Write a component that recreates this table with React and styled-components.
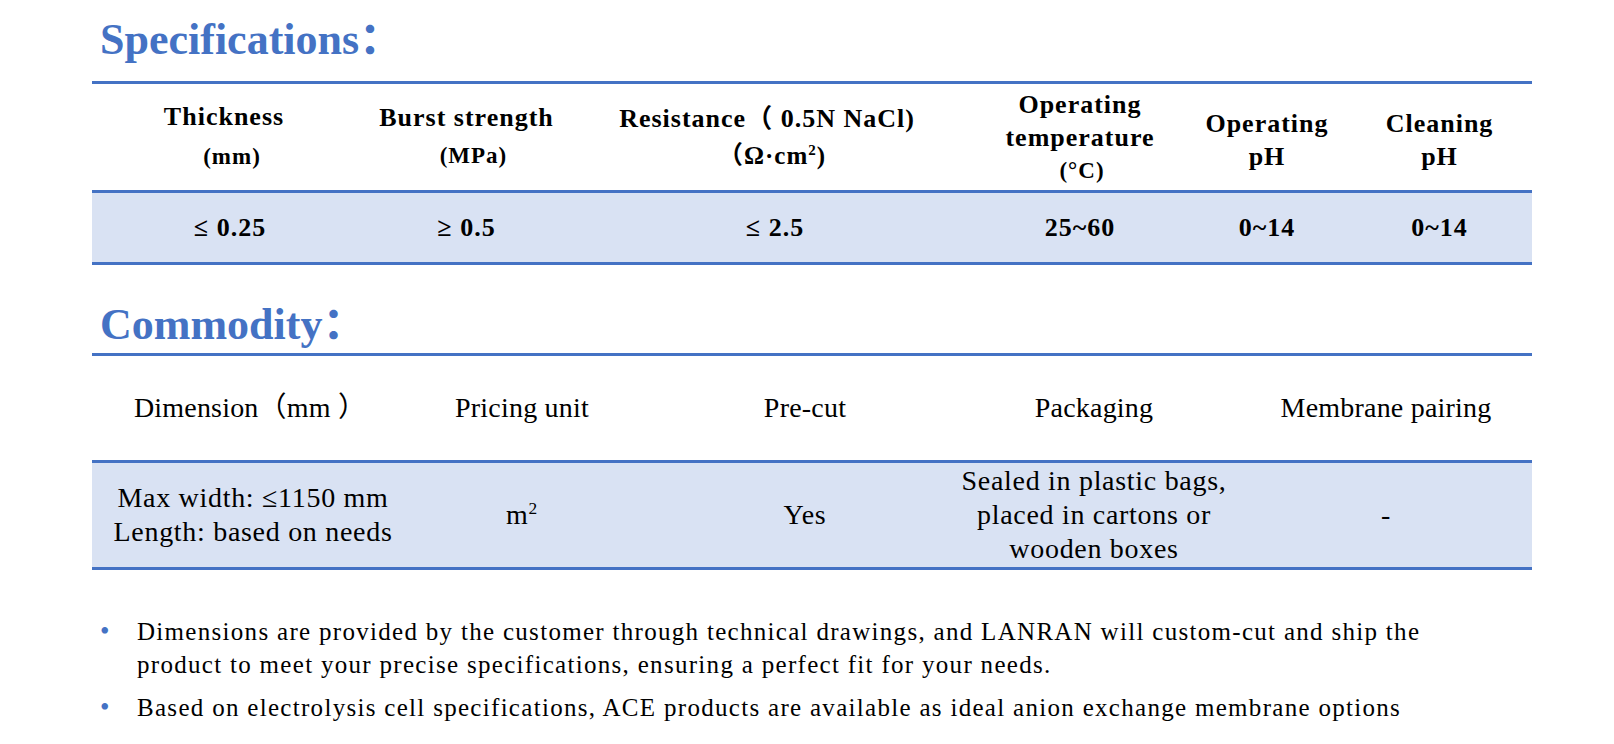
import React from "react";
import styled, { createGlobalStyle } from "styled-components";

const BLUE = "#4472C4";
const SHADE = "#D9E2F3";
const SERIF = `"Liberation Serif", "Times New Roman", "Noto Sans CJK SC", serif`;

const Global = createGlobalStyle`
  html, body { margin: 0; padding: 0; background: #fff; }
  body { font-family: ${SERIF}; color: #000; }
`;

const Page = styled.main`
  width: 1440px;
  padding: 14px 0 0 92px;
`;

const Title = styled.h2`
  margin: ${(p) => p.$mt}px 0 ${(p) => p.$mb}px;
  padding-left: 8px;
  font-family: ${SERIF};
  font-weight: bold;
  font-size: 44px;
  line-height: 52px;
  color: ${BLUE};
`;

const Table = styled.section`
  border-top: 3px solid ${BLUE};
  border-bottom: 3px solid ${BLUE};
`;

const Row = styled.div`
  display: grid;
  grid-template-columns: ${(p) => p.$cols};
  height: ${(p) => p.$h}px;
  background: ${(p) => (p.$shade ? SHADE : "transparent")};
  & + & {
    border-top: 3px solid ${BLUE};
  }
`;

const Cell = styled.div`
  display: flex;
  flex-direction: column;
  align-items: center;
  justify-content: center;
  text-align: center;
  padding-top: ${(p) => p.$pt || 0}px;
  padding-left: ${(p) => p.$pl || 0}px;
`;

const HeadLine = styled.span`
  font-weight: bold;
  font-size: ${(p) => p.$size || 26}px;
  line-height: ${(p) => p.$lh}px;
  letter-spacing: 1px;
  white-space: nowrap;
  padding-left: ${(p) => Math.max(p.$shift || 0, 0)}px;
  padding-right: ${(p) => Math.max(-(p.$shift || 0), 0)}px;
`;

const Value = styled.span`
  font-weight: bold;
  font-size: 26px;
  line-height: 34px;
  letter-spacing: 1px;
  white-space: nowrap;
`;

const Plain = styled.span`
  font-size: 28px;
  line-height: 34px;
  letter-spacing: ${(p) => (p.$data ? 0.7 : 0.2)}px;
  white-space: nowrap;
  sup {
    font-size: 0.62em;
    line-height: 0;
    vertical-align: 0.55em;
  }
`;

const Sup = styled.sup`
  font-size: 0.6em;
  line-height: 0;
  vertical-align: 0.6em;
`;

const Notes = styled.ul`
  list-style: none;
  margin: 45px 0 0;
  padding: 0;
`;

const Note = styled.li`
  display: flex;
  & + & {
    margin-top: 10px;
  }
`;

const Dot = styled.span`
  flex: 0 0 45px;
  box-sizing: border-box;
  padding-left: 8px;
  color: ${BLUE};
  font-size: 27px;
  line-height: 33px;
`;

const NoteText = styled.p`
  margin: 0;
  width: 1310px;
  font-size: 25px;
  line-height: 33px;
  letter-spacing: 1.3px;
`;

const SPEC_COLS = "264px 221px 396px 214px 160px 1fr";
const COMM_COLS = "316px 228px 338px 240px 1fr";

const specHead = [
  { lh: 40, lines: [["Thickness"], ["(mm)", 23, 16]] },
  { lh: 38, lines: [["Burst strength"], ["(MPa)", 23, 14]] },
  { lh: 37, lines: [["Resistance（ 0.5N NaCl)", 26, -16], [<>（Ω·cm<Sup>2</Sup>)</>, 25, -6]] },
  { lh: 33, lines: [["Operating"], ["temperature"], ["(°C)", 23, 4]] },
  { lh: 33, pt: 6, lines: [["Operating"], ["pH"]] },
  { lh: 33, pt: 6, lines: [["Cleaning"], ["pH"]] },
];

const specVals = [
  { v: "≤ 0.25", pl: 12 },
  { v: "≥ 0.5" },
  { v: "≤ 2.5" },
  { v: "25~60" },
  { v: "0~14" },
  { v: "0~14" },
];

const commHead = ["Dimension（mm ）", "Pricing unit", "Pre-cut", "Packaging", "Membrane pairing"];
const commShift = [0, 0, 0, 0, 26];
const commDataShift = [6, 0, 0, 0, 26];

const commVals = [
  ["Max width: ≤1150 mm", "Length: based on needs"],
  [<>m<sup>2</sup></>],
  ["Yes"],
  ["Sealed in plastic bags,", "placed in cartons or", "wooden boxes"],
  ["-"],
];

export default function App() {
  return (
    <>
      <Global />
      <Page>
        <Title $mt={0} $mb={15}>Specifications：</Title>
        <Table>
          <Row $cols={SPEC_COLS} $h={106}>
            {specHead.map((h, i) => (
              <Cell key={i} $pt={h.pt}>
                {h.lines.map(([t, size, shift], j) => (
                  <HeadLine key={j} $lh={h.lh} $size={size} $shift={shift}>
                    {t}
                  </HeadLine>
                ))}
              </Cell>
            ))}
          </Row>
          <Row $cols={SPEC_COLS} $h={69} $shade>
            {specVals.map((c, i) => (
              <Cell key={i} $pl={c.pl}>
                <Value>{c.v}</Value>
              </Cell>
            ))}
          </Row>
        </Table>

        <Title $mt={34} $mb={2}>Commodity：</Title>
        <Table>
          <Row $cols={COMM_COLS} $h={104}>
            {commHead.map((t, i) => (
              <Cell key={i} $pl={commShift[i]}>
                <Plain>{t}</Plain>
              </Cell>
            ))}
          </Row>
          <Row $cols={COMM_COLS} $h={104} $shade>
            {commVals.map((lines, i) => (
              <Cell key={i} $pl={commDataShift[i]}>
                {lines.map((l, j) => (
                  <Plain key={j} $data>
                    {l}
                  </Plain>
                ))}
              </Cell>
            ))}
          </Row>
        </Table>

        <Notes>
          <Note>
            <Dot>•</Dot>
            <NoteText>
              Dimensions are provided by the customer through technical drawings, and LANRAN will custom-cut and ship the
              product to meet your precise specifications, ensuring a perfect fit for your needs.
            </NoteText>
          </Note>
          <Note>
            <Dot>•</Dot>
            <NoteText>
              Based on electrolysis cell specifications, ACE products are available as ideal anion exchange membrane options
            </NoteText>
          </Note>
        </Notes>
      </Page>
    </>
  );
}
